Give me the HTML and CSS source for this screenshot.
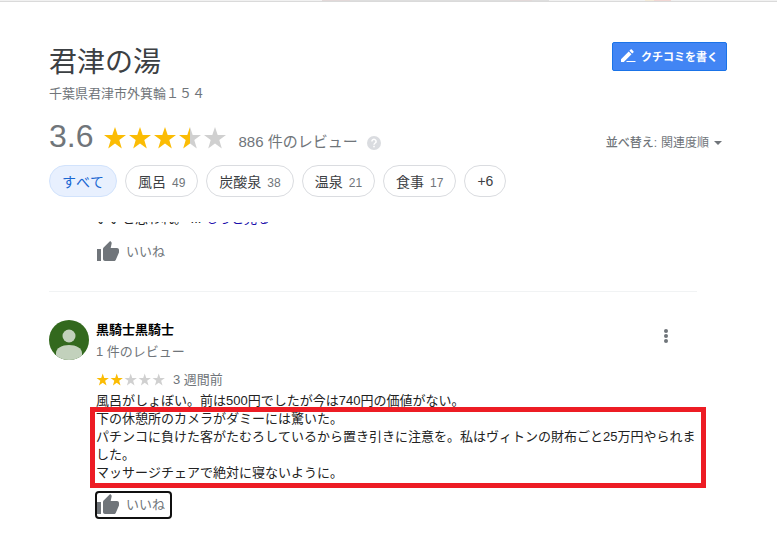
FILE: index.html
```html
<!DOCTYPE html>
<html lang="ja">
<head>
<meta charset="utf-8">
<meta name="viewport" content="width=device-width, initial-scale=1">
<title>君津の湯 - クチコミ</title>
<link rel="stylesheet" href="styles.css">
</head>
<body>
<svg class="defs" aria-hidden="true">
  <defs>
    <linearGradient id="half"><stop offset="50%" stop-color="#fbbc04"/><stop offset="50%" stop-color="#d0d0d0"/></linearGradient>
    <path id="star" d="M12 1l2.700 8H23l-6.700 5 2.500 8.500L12 17.500l-6.800 5L7.700 14 1 9h8.300z"/>
    <path id="thumb" d="M1 21h4V9H1v12zm22-11c0-1.100-.9-2-2-2h-6.310l.95-4.570.03-.32c0-.41-.17-.79-.44-1.060L14.170 1 7.590 7.590C7.220 7.950 7 8.450 7 9v10c0 1.100.9 2 2 2h9c.83 0 1.540-.5 1.840-1.220l3.020-7.050c.09-.23.14-.47.14-.73v-2z"/>
  </defs>
</svg>
<div class="strip"></div>
<header class="header">
  <div class="row">
    <div>
      <h1 class="title">君津の湯</h1>
      <p class="address">千葉県君津市外箕輪１５４</p>
    </div>
    <button class="write" type="button">
      <svg width="16" height="16" viewBox="0 0 16 16" fill="#fff" aria-hidden="true"><path d="M1 11.200V14h2.800l7.700-7.700-2.800-2.800zM13.400 4.400c.4-.4.4-.9 0-1.200L11.800 1.600c-.4-.4-.9-.4-1.200 0L9.400 2.800l2.800 2.800zM7 13h8.500v1H6z"/></svg>
      クチコミを書く
    </button>
  </div>
  <div class="row summary">
    <div class="rating">
      <span class="score">3.6</span>
      <svg class="stars" width="125" height="24" viewBox="0 0 125 24" role="img" aria-label="5つ星のうち3.6">
        <g fill="#fbbc04"><use href="#star"/><use href="#star" x="25"/><use href="#star" x="50"/></g>
        <use href="#star" x="75" fill="url(#half)"/><use href="#star" x="100" fill="#d0d0d0"/>
      </svg>
      <span class="count">886 件のレビュー</span>
      <svg class="help" width="14" height="14" viewBox="0 0 14 14" aria-hidden="true"><circle cx="7" cy="7" r="7" fill="#dadce0"/><path d="M4.900 5.400a2.100 2 0 1 1 3.300 1.600C7.400 7.600 7 7.900 7 8.700" fill="none" stroke="#fff" stroke-width="1.500"/><rect x="6.200" y="9.800" width="1.600" height="1.500" fill="#fff"/></svg>
    </div>
    <div class="sort">
      <label for="sort">並べ替え:</label>
      <select id="sort"><option>関連度順</option></select>
      <svg width="8" height="4" viewBox="0 0 8 4" aria-hidden="true"><path d="M0 0h8L4 4z" fill="#70757a"/></svg>
    </div>
  </div>
  <div class="chips">
    <button class="chip selected" type="button">すべて</button>
    <button class="chip" type="button">風呂<small>49</small></button>
    <button class="chip" type="button">炭酸泉<small>38</small></button>
    <button class="chip" type="button">温泉<small>21</small></button>
    <button class="chip" type="button">食事<small>17</small></button>
    <button class="chip" type="button">+6</button>
  </div>
</header>
<main class="list">
  <article class="review partial">
    <div class="body">
      <p class="text">いいと思われ。 ... <a href="#more">もっと見る</a></p>
      <button class="like" type="button"><svg width="24" height="24" viewBox="0 0 24 24" aria-hidden="true"><use href="#thumb"/></svg>いいね</button>
    </div>
  </article>
  <article class="review">
    <svg class="avatar" width="40" height="40" viewBox="0 0 40 40" aria-hidden="true">
      <clipPath id="round"><circle cx="20" cy="20" r="20"/></clipPath>
      <g clip-path="url(#round)"><rect width="40" height="40" fill="#33691e"/><g fill="#c2d1bc"><circle cx="20" cy="16" r="6.500"/><path d="M7 40v-7c0-5 6-8 13-8s13 3 13 8v7z"/></g></g>
    </svg>
    <div class="body">
      <div class="row">
        <div>
          <h2 class="name">黒騎士黒騎士</h2>
          <p class="meta">1 件のレビュー</p>
        </div>
        <button class="menu" type="button" aria-label="その他">
          <svg width="6" height="16" viewBox="0 0 6 16" fill="#70757a" aria-hidden="true"><circle cx="3" cy="3" r="2"/><circle cx="3" cy="8" r="2"/><circle cx="3" cy="13" r="2"/></svg>
        </button>
      </div>
      <div class="when">
        <svg width="70" height="14" viewBox="0 0 125 25" role="img" aria-label="5つ星のうち2">
          <g fill="#fbbc04"><use href="#star"/><use href="#star" x="25"/></g>
          <g fill="#d0d0d0"><use href="#star" x="50"/><use href="#star" x="75"/><use href="#star" x="100"/></g>
        </svg>
        3 週間前
      </div>
      <p class="text">風呂がしょぼい。前は500円でしたが今は740円の価値がない。</p>
      <p class="text boxed">下の休憩所のカメラがダミーには驚いた。<br>パチンコに負けた客がたむろしているから置き引きに注意を。私はヴィトンの財布ごと25万円やられました。<br>マッサージチェアで絶対に寝ないように。</p>
      <button class="like focused" type="button"><svg width="24" height="24" viewBox="0 0 24 24" aria-hidden="true"><use href="#thumb"/></svg>いいね</button>
    </div>
  </article>
</main>
</body>
</html>
```
FILE: styles.css
```css
* { box-sizing: border-box; margin: 0; }

body {
  background: #fff;
  color: #222;
  font: 13px/18px "Liberation Sans", "Noto Sans CJK JP", sans-serif;
  font-kerning: none;
}

button, select {
  font-family: inherit;
  font-kerning: inherit;
  border: 0;
  padding: 0;
  background: none;
  cursor: pointer;
}

svg { display: block; flex: none; }
.defs { position: absolute; width: 0; height: 0; }

.strip {
  height: 2px;
  border-bottom: 1px solid #dadada;
  background: linear-gradient(90deg, #f1f1f1 322px, #e2d8d8 322px 350px, #dedede 350px 510px, #e2d8d8 510px 532px, #dedede 532px 549px, #f1f1f1 549px 645px, #f3ead8 645px 654px, #f1d6d3 654px 671px, #f1f1f1 671px);
}

.header { padding: 40px 50px 0 49px; }
.row { display: flex; justify-content: space-between; align-items: flex-start; }
.title { color: #3c4043; font-size: 28px; font-weight: 400; line-height: 42px; }
.address { color: #70757a; line-height: 20px; }

.write {
  display: flex;
  align-items: center;
  gap: 5px;
  padding: 0 8px 2px 7px;
  height: 29px;
  border: 1px solid #1a73e8;
  border-radius: 2px;
  background: #4285f4;
  color: #fff;
  font-size: 11px;
  font-weight: 700;
}

.summary { height: 40px; margin-top: 12px; align-items: center; }
.rating { display: flex; align-items: center; color: #70757a; }
.score { font-size: 32px; line-height: 40px; }
.stars { margin: 4px 0 0 10px; }
.count { margin: 12px 9px 0 10px; font-size: 15px; line-height: 20px; }
.help { margin-top: 14px; }
.sort { display: flex; align-items: center; gap: 4px; margin: 14px 5px 0 0; color: #70757a; font-size: 12px; }
.sort label { font-weight: 500; }
.sort select { appearance: none; color: inherit; font-size: 12px; }

.chips { display: flex; flex-wrap: wrap; gap: 8px; margin-top: 9px; }
.chip {
  height: 32px;
  padding: 0 12px 1px;
  border: 1px solid #dadce0;
  border-radius: 16px;
  color: #3c4043;
  font-size: 14px;
}
.chip small { margin-left: 6px; color: #70757a; font-size: 12px; }
.chip.selected { border-color: #d2e3fc; background: #e8f0fe; color: #1967d2; }

.list { margin-top: 25px; padding: 0 80px 20px 49px; overflow: hidden; }
.review { display: flex; gap: 7px; }
.body { flex: 1; min-width: 0; }
.partial { margin-top: -12px; padding: 0 0 27px 47px; border-bottom: 1px solid #f1f3f4; }
.partial .like { margin-top: 12px; }
.partial + .review { padding-top: 28px; }
.text a { color: #1a0dab; text-decoration: none; }

.like {
  display: flex;
  align-items: center;
  gap: 6px;
  color: #70757a;
  font-size: 13px;
  line-height: 24px;
}
.like svg { fill: #70757a; }
.focused { margin: 11px 0 0 1px; padding-right: 5px; outline: 2px solid #101010; border-radius: 2px; }
.focused svg { margin-left: -1px; }

.name { color: #000; font-size: 13px; line-height: 20px; }
.meta { color: #70757a; line-height: 24px; }
.menu { margin: 8px 28px 0 0; }
.when { display: flex; align-items: center; gap: 7px; margin: 6px 0 2px; color: #70757a; line-height: 20px; }

.boxed { position: relative; }
.boxed::after {
  content: "";
  position: absolute;
  inset: -3px -9px -6px -6px;
  border: 5px solid #ed1c24;
  pointer-events: none;
}
```
